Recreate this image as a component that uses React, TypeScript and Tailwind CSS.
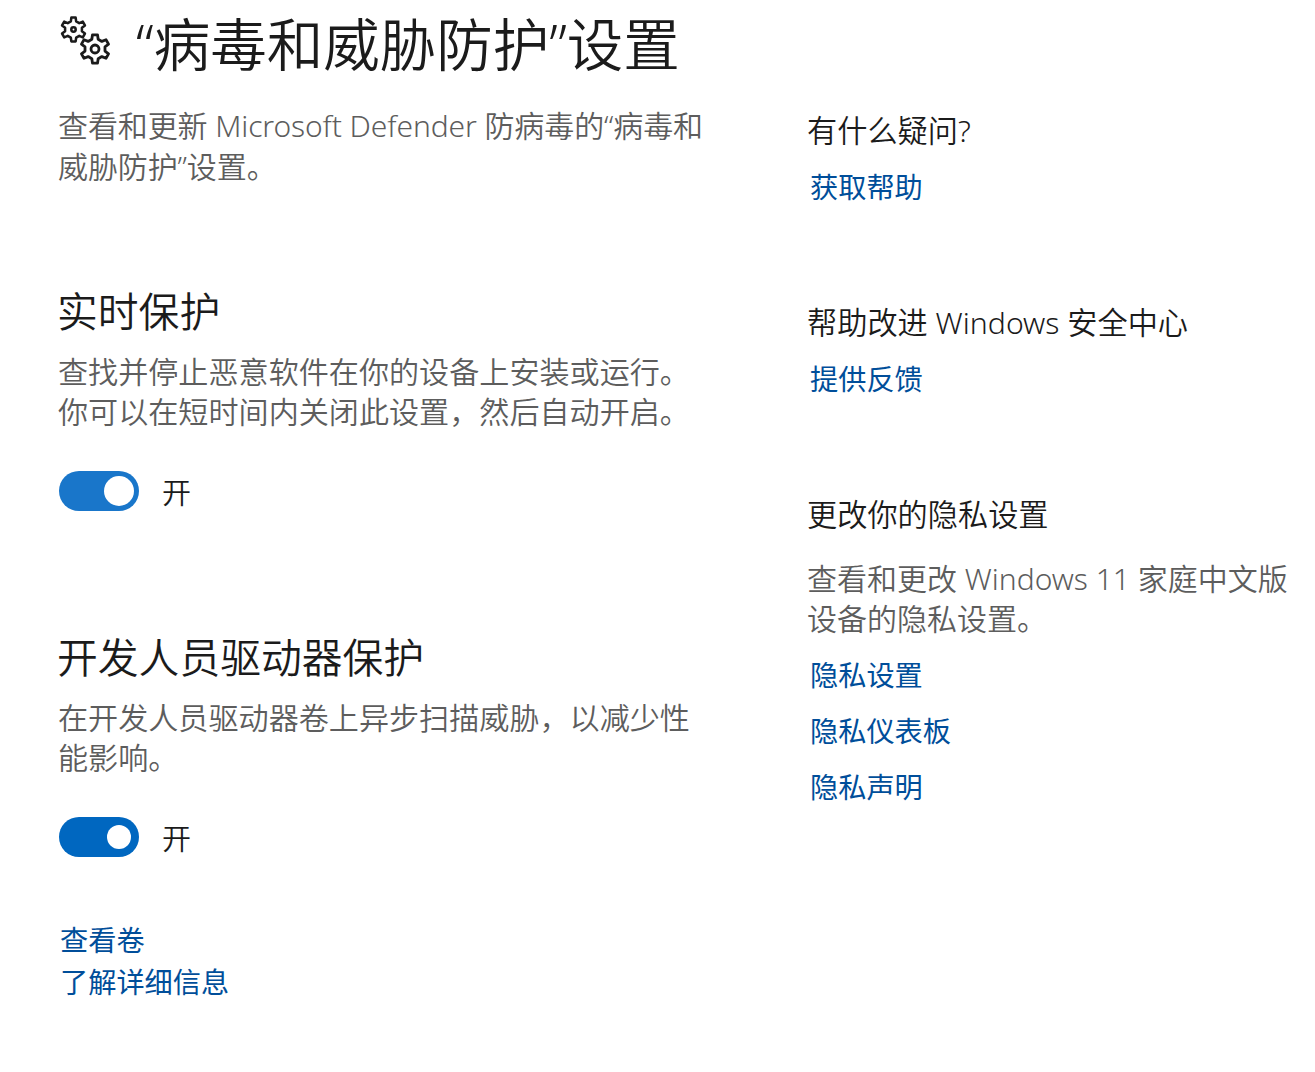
const font = { fontFamily: '"Noto Sans","Noto Sans CJK SC",sans-serif' };

function Gear({ cls, hub, sw }: { cls: string; hub: number; sw: number }) {
  const teeth = 6;
  const step = (Math.PI * 2) / teeth;
  const p = (r: number, t: number) => `${(16 + r * Math.cos(t)).toFixed(2)} ${(16 + r * Math.sin(t)).toFixed(2)}`;
  const segs: string[] = [];
  for (let i = 0; i < teeth; i++) {
    const a = i * step - Math.PI / 2;
    segs.push(`${i === 0 ? "M" : "L"}${p(10.2, a - step * 0.3)}`);
    segs.push(`L${p(14.4, a - step * 0.17)}`);
    segs.push(`L${p(14.4, a + step * 0.17)}`);
    segs.push(`L${p(10.2, a + step * 0.3)}`);
  }
  return (
    <svg viewBox="0 0 32 32" className={cls} fill="none" stroke="currentColor" strokeWidth={sw} strokeLinejoin="round">
      <path d={segs.join(" ") + "Z"} />
      <circle cx="16" cy="16" r={hub} />
    </svg>
  );
}

function Toggle({ color, knob }: { color: string; knob: string }) {
  return (
    <div className="ml-[1px] mt-[39px] flex h-[40px] items-center">
      <div className={`flex h-[40px] w-[80px] items-center justify-end rounded-full pr-[5px] ${color}`}>
        <div className={`rounded-full bg-white ${knob}`} />
      </div>
      <span className="ml-[23px] mt-[4px] text-[29px] font-[350] leading-[40px] text-[#1b1b1b]">开</span>
    </div>
  );
}

function Link({ children, cls = "" }: { children: string; cls?: string }) {
  return <div className={`ml-[2px] text-[28.2px] font-normal leading-[40px] text-[#004e9a] ${cls}`}>{children}</div>;
}

export default function App() {
  return (
    <div className="flex h-[1072px] w-[1315px] overflow-hidden bg-white pl-[58px] font-[350]" style={font}>
      <div className="w-[750px] shrink-0">
        <div className="flex h-[92px] items-start">
          <div className="relative mt-[16px] h-[54px] w-[54px] shrink-0 text-[#1b1b1b]">
            <Gear cls="absolute left-[2px] top-[0px] h-[27px] w-[27px]" hub={2.6} sw={3} />
            <Gear cls="absolute left-[21px] top-[17px] h-[32px] w-[32px]" hub={4} sw={2.8} />
          </div>
          <h1 className="ml-[24px] -mt-[1px] whitespace-nowrap text-[56.5px] font-[350] leading-[92px] text-[#1b1b1b]">“病毒和威胁防护”设置</h1>
        </div>
        <p className="mt-[13px] w-[650px] text-[30px] leading-[41px] tracking-[-0.1px] text-[#5d5d5d]">查看和更新 Microsoft Defender 防病毒的“病毒和威胁防护”设置。</p>

        <h2 className="-ml-[1px] mt-[96px] text-[40.8px] font-[350] leading-[56px] text-[#1b1b1b]">实时保护</h2>
        <p className="mt-[13px] w-[650px] text-[30.1px] leading-[40px] text-[#5d5d5d]">查找并停止恶意软件在你的设备上安装或运行。你可以在短时间内关闭此设置，然后自动开启。</p>
        <Toggle color="bg-[#1976ca]" knob="h-[30px] w-[30px]" />

        <h2 className="-ml-[1px] mt-[118px] text-[40.8px] font-[350] leading-[56px] text-[#1b1b1b]">开发人员驱动器保护</h2>
        <p className="mt-[13px] w-[650px] text-[30.1px] leading-[40px] text-[#5d5d5d]">在开发人员驱动器卷上异步扫描威胁，以减少性能影响。</p>
        <Toggle color="bg-[#0067c0]" knob="h-[24px] w-[24px] mr-[3px]" />

        <Link cls="mt-[63px]">查看卷</Link>
        <Link cls="mt-[2px]">了解详细信息</Link>
      </div>

      <div className="-ml-[1px] w-[490px] shrink-0 pt-[110px]">
        <h3 className="text-[30.2px] font-[350] leading-[42px] text-[#1b1b1b]">有什么疑问?</h3>
        <Link cls="mt-[15px] ml-[3px]">获取帮助</Link>

        <h3 className="mt-[95px] text-[30.2px] font-[350] leading-[42px] text-[#1b1b1b]">帮助改进 Windows 安全中心</h3>
        <Link cls="mt-[15px] ml-[3px]">提供反馈</Link>

        <h3 className="mt-[95px] text-[30.2px] font-[350] leading-[42px] text-[#1b1b1b]">更改你的隐私设置</h3>
        <p className="mt-[23px] text-[30px] leading-[40px] text-[#5d5d5d]">查看和更改 Windows 11 家庭中文版设备的隐私设置。</p>
        <Link cls="mt-[16px] ml-[3px]">隐私设置</Link>
        <Link cls="mt-[16px] ml-[3px]">隐私仪表板</Link>
        <Link cls="mt-[16px] ml-[3px]">隐私声明</Link>
      </div>
    </div>
  );
}
